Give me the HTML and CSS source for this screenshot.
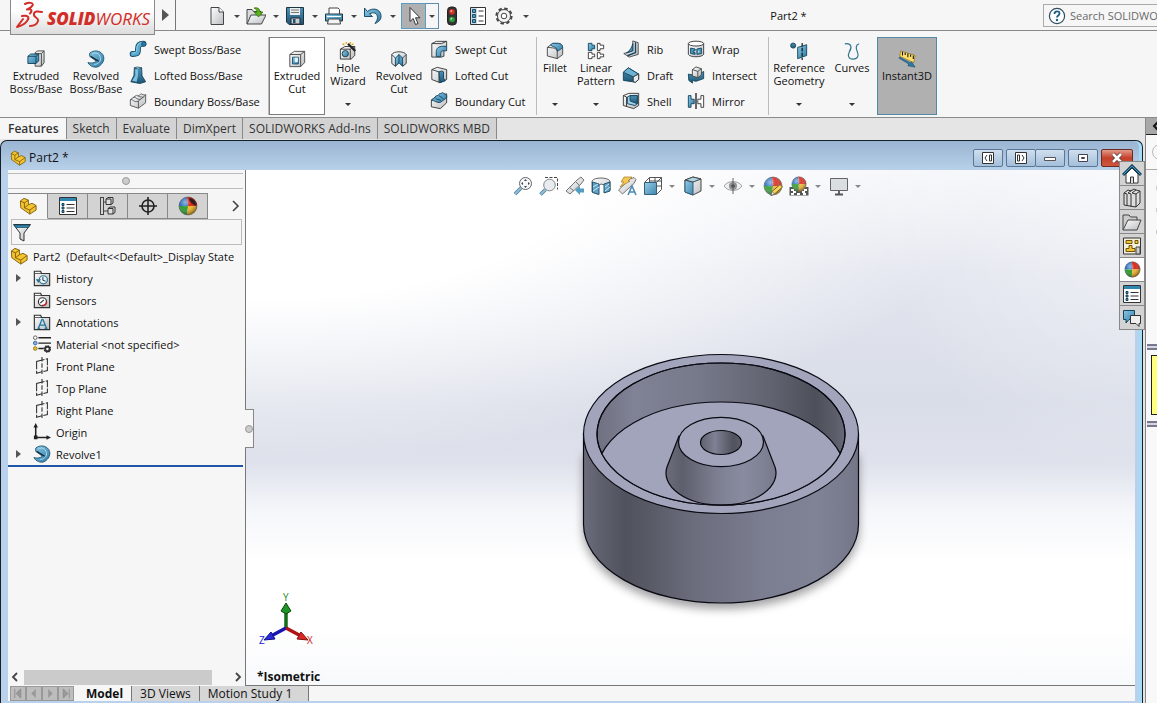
FILE: index.html
```html
<!DOCTYPE html>
<html lang="en">
<head>
    <meta charset="UTF-8">
    <meta name="viewport" content="width=device-width, initial-scale=1.0">
    <title>SOLIDWORKS - Part2 *</title>
    <link rel="stylesheet" href="styles.css">
</head>
<body>
    <!-- Icon sprite -->
    <svg class="sprite" aria-hidden="true">
        <defs>
            <linearGradient id="blue" x1="0" y1="0" x2="1" y2="1">
                <stop offset="0" stop-color="#8cc8e4"/><stop offset="1" stop-color="#2c7ba6"/>
            </linearGradient>
            <linearGradient id="grey" x1="0" y1="0" x2="1" y2="1">
                <stop offset="0" stop-color="#ffffff"/><stop offset="1" stop-color="#b9bcbf"/>
            </linearGradient>
            <linearGradient id="navy" x1="0" y1="0" x2="0" y2="1">
                <stop offset="0" stop-color="#4d93b8"/><stop offset="1" stop-color="#1d5573"/>
            </linearGradient>
            <radialGradient id="shine" cx=".35" cy=".3" r=".7">
                <stop offset="0" stop-color="#fff" stop-opacity=".5"/><stop offset=".45" stop-color="#fff" stop-opacity="0"/><stop offset="1" stop-color="#000" stop-opacity=".4"/>
            </radialGradient>
        </defs>

        <!-- quick access -->
        <symbol id="i-new" viewBox="0 0 20 20"><path d="M4 1.500h8l4.500 4.500v12.500H4z" fill="url(#grey)" stroke="#444"/><path d="M12 1.500v4.500h4.500" fill="#fff" stroke="#444"/></symbol>
        <symbol id="i-open" viewBox="0 0 20 20"><path d="M1 18V3.500h5l1.500 2H15V9" fill="#d8dadb" stroke="#444"/><path d="M1 18l4-9h15l-4.500 9z" fill="url(#grey)" stroke="#444"/><path d="M8 2c4-1 6 1 6 4h3l-4.500 5L8 6h3c0-2-1-3-3-4z" fill="#58b21c" stroke="#2d6b08" stroke-width=".7"/></symbol>
        <symbol id="i-save" viewBox="0 0 20 20"><path d="M1.500 1.500h17v17H4l-2.500-2.500z" fill="url(#navy)" stroke="#20343f"/><path d="M5 2h10v7H5z" fill="#eceeef"/><path d="M6 4h8M6 6.500h8" stroke="#777"/><path d="M6 12h9v6H6z" fill="#c9cdd0" stroke="#223"/><path d="M8 13h2.500v4H8z" fill="#1d5573"/></symbol>
        <symbol id="i-print" viewBox="0 0 20 20"><path d="M5 8V2h9l1.500 1.500V8" fill="#fff" stroke="#444"/><path d="M1.500 8h17v7h-17z" fill="url(#blue)" stroke="#20343f"/><path d="M3 10.500h14" stroke="#fff"/><path d="M4.500 13h11l1 5h-13z" fill="#f3f3f3" stroke="#444"/></symbol>
        <symbol id="i-undo" viewBox="0 0 20 20"><path d="M1.500 2v8.500h8L6.500 8c4-2.500 8-1 8 3.500 0 2-1 4-2.500 6 4-1.500 6.500-4.500 6-8C17.500 3 9.500 1 4.500 5.500z" fill="url(#blue)" stroke="#1d4f6b"/></symbol>
        <symbol id="i-cursor" viewBox="0 0 20 20"><path d="M6 1.500v14l3.200-3 2.300 6 2.500-1-2.500-5.700H16z" fill="#fff" stroke="#333"/></symbol>
        <symbol id="i-light" viewBox="0 0 20 20"><rect x="5.500" y="1" width="9" height="18" rx="3.500" fill="#333" stroke="#222"/><circle cx="10" cy="5.800" r="2.800" fill="#d93024"/><circle cx="10" cy="13.500" r="2.800" fill="#2c9a3a"/><circle cx="9.300" cy="5" r="1" fill="#f9b0a8"/><circle cx="9.300" cy="12.700" r="1" fill="#a5e2ad"/></symbol>
        <symbol id="i-list" viewBox="0 0 20 20"><path d="M2.500 1.500h15v17h-15z" fill="#fff" stroke="#333"/><path d="M3 2h6v16H3z" fill="#c8dbe6"/><path d="M4.500 3.500h3v3h-3zM4.500 8.500h3v3h-3zM4.500 13.500h3v3h-3z" fill="#4f9cc4" stroke="#1d4f6b"/><path d="M10.500 5h5M10.500 10h5M10.500 15h5" stroke="#333"/></symbol>
        <symbol id="i-gear" viewBox="0 0 20 20"><circle cx="10" cy="10" r="7.600" fill="none" stroke="#444" stroke-width="2" stroke-dasharray="3.500 2.470"/><circle cx="10" cy="10" r="6.500" fill="#f5f5f5" stroke="#444"/><circle cx="10" cy="10" r="2.800" fill="#fff" stroke="#444"/></symbol>
        <symbol id="i-help" viewBox="0 0 20 20"><circle cx="10" cy="10" r="7.600" fill="#fff" stroke="#2f4d5d" stroke-width="1.200"/><path d="M7.500 8c0-3.500 5-3.500 5-.5 0 2-2.500 2-2.500 4" fill="none" stroke="#1f5f85" stroke-width="1.800"/><circle cx="10" cy="14" r="1.200" fill="#1f5f85"/></symbol>

        <!-- boss / base -->
        <symbol id="i-extrude" viewBox="0 0 20 20"><path d="M9 3l3-2h7v13l-3 4H9z" fill="url(#grey)" stroke="#444"/><path d="M16 18V4l3-3M16 4H9" fill="none" stroke="#444"/><path d="M1 7l3-2.500h9V12l-3 3H1z" fill="url(#blue)" stroke="#123f58"/><path d="M1 7h9v8M10 7l3-2.500" fill="none" stroke="#123f58"/></symbol>
        <symbol id="i-revolve" viewBox="0 0 20 20"><path d="M3 3.500C7 0 14 0 17.500 5c3 5 0 11-5 13.500-4 1.500-9 0-11.500-4.500 3 1 7 .5 9.500-1.500L3 7z" fill="url(#blue)" stroke="#1d5573"/><path d="M4 7l9 5.500" stroke="#123" stroke-width="1.400"/><path d="M6 4c5-2 9 1 9 6 0 3-3 6-7 6" fill="none" stroke="#b5dced"/></symbol>
        <symbol id="i-sweep" viewBox="0 0 20 20"><path d="M4 15.500c6 0 6-1 6-6 0-4 2-5.500 6-5.500" fill="none" stroke="#184c68" stroke-width="6.500" stroke-linecap="round"/><path d="M4 15.500c6 0 6-1 6-6 0-4 2-5.500 6-5.500" fill="none" stroke="#5aa9cf" stroke-width="4.500" stroke-linecap="round"/><path d="M4 14.500c4 0 4.800-1 4.800-5 0-4.500 2.200-6.200 6.200-6.200" fill="none" stroke="#9bd1e8"/><circle cx="16.500" cy="4.500" r="2.500" fill="#2c7ba6" stroke="#184c68"/></symbol>
        <symbol id="i-loft" viewBox="0 0 20 20"><path d="M6 2h8l.5 9 4 6.500-6.500 2-10-2 3.500-7z" fill="url(#navy)" stroke="#14435c"/><path d="M6 2l3-1 5 1-3 1.500z" fill="#a9d7eb" stroke="#14435c" stroke-width=".7"/><path d="M7 3.500h3v7l-1.500 7-5-1 3.500-6z" fill="#7dbfdd"/></symbol>
        <symbol id="i-boundary" viewBox="0 0 20 20"><path d="M1.500 8.500l7-5c1.500 2 3 0 5-1.500 1.500 1 3 1.500 5 1v9l-8 6-9-3z" fill="url(#grey)" stroke="#555"/><path d="M1.500 8.500c3-1 4 4 9 1.500 3-3 5-3 8-7M10.500 10v8M5 6c3-1 3 3 8 2M10 4c2 2 3 1 6 2" fill="none" stroke="#555"/></symbol>

        <!-- cuts -->
        <symbol id="i-excut" viewBox="0 0 20 20"><path d="M2 5l5-3.500h11.500V14L14 18.500H2z" fill="url(#grey)" stroke="#444"/><path d="M2 5h12v13.500M14 5l4.500-3.500" fill="none" stroke="#444"/><path d="M5 8h6.500v7.500H5z" fill="url(#blue)" stroke="#1d4f6b"/><path d="M7.500 8.500H11v5H7.500z" fill="#e5f3f9"/></symbol>
        <symbol id="i-hole" viewBox="0 0 20 20"><path d="M1.500 8l5-3h11v10l-4 4h-12z" fill="url(#grey)" stroke="#333"/><path d="M1.500 8h11v11M12.500 8l5-3" fill="none" stroke="#333"/><circle cx="7" cy="13" r="3.500" fill="url(#blue)" stroke="#20343f"/><path d="M10 2l8 8" stroke="#222" stroke-width="2.500"/><path d="M4 2l2 1M8 0v2M13 0l-1 2M16 2l-2 1" stroke="#e2a100" stroke-width="1.500"/></symbol>
        <symbol id="i-revcut" viewBox="0 0 20 20"><path d="M2 5c2-4 14-4 16 0v10l-4 3-4-4-4 4-4-3z" fill="url(#grey)" stroke="#333"/><path d="M6 18V9l4-4 4 4v9l-4-4z" fill="url(#blue)" stroke="#14435c"/><path d="M2 5l4 4M18 5l-4 4M10 5v9" stroke="#14435c" fill="none"/></symbol>
        <symbol id="i-swcut" viewBox="0 0 20 20"><path d="M2 4l5-2.500h11.500V7l-3 3v8l-3 1H2z" fill="url(#grey)" stroke="#333"/><path d="M7 18.500V13c0-4 3-6 7-6h4.500v5H15c-2 0-3 1-3 3v3.500z" fill="url(#blue)" stroke="#14435c"/><path d="M2 4h11l5-2.500" fill="none" stroke="#333"/></symbol>
        <symbol id="i-locut" viewBox="0 0 20 20"><path d="M2 4l6-2.500L18.500 4v11L11 18.500 2 15z" fill="url(#grey)" stroke="#333"/><path d="M2 4l8 2.500v12" fill="none" stroke="#333"/><path d="M10 6.500l3-1 2 1v7l2 3-6 2z" fill="url(#navy)" stroke="#14435c"/></symbol>
        <symbol id="i-bocut" viewBox="0 0 20 20"><path d="M1.500 9l7-5 10-2v10l-7 6.500-10-2z" fill="url(#grey)" stroke="#333"/><path d="M1.500 9l4-3c1-3 3-1 4-3s4-1 4.500-2.500L18.500 4v2.500l-7 5c-4 1-6-2-10-2.500z" fill="url(#blue)" stroke="#14435c"/><path d="M6 6.500c2 3 4 1 6 3M10 4c2 2 3 1 5 4" fill="none" stroke="#14435c"/></symbol>

        <!-- features -->
        <symbol id="i-fillet" viewBox="0 0 20 20"><path d="M1.500 6l6-4.500h6c3 0 5 2 5 5V14l-6 4.500-11-3z" fill="url(#grey)" stroke="#444"/><path d="M7 1.500h6.500c3 0 5 2 5 5l-6 4C12.500 7 11 6 8 5l-3-1.500z" fill="url(#blue)" stroke="#1d4f6b"/><path d="M1.500 6l6 .5c3 .5 5 1.500 5 4v8" fill="none" stroke="#444"/></symbol>
        <symbol id="i-pattern" viewBox="0 0 20 20"><g stroke="#333" fill="#fff"><path d="M1.500 1.500h4v2h3v4h-3v2h-4z" fill="url(#blue)" stroke="#14435c"/><path d="M11.500 1.500h3v2h4v4h-4v2h-3zM1.500 11.500h4v2h3v3h-3v2h-4zM11.500 11.500h3v2h4v3h-4v2h-3z"/></g></symbol>
        <symbol id="i-rib" viewBox="0 0 20 20"><path d="M12 1l6 2v13l-10 3-6-4 10-3z" fill="url(#grey)" stroke="#444"/><path d="M12 4v8l-7 2.500C9 12 11 8 12 4z" fill="url(#blue)" stroke="#14435c"/><path d="M15 2.500V14l-9 3.500" fill="none" stroke="#14435c" stroke-width="1.500"/></symbol>
        <symbol id="i-draft" viewBox="0 0 20 20"><path d="M1.500 7L7 2l11.500 7v6L15 18 1.500 16z" fill="url(#navy)" stroke="#14435c"/><path d="M1.500 7L7 2l11.500 7-6 3z" fill="#6db2d3" stroke="#14435c"/><path d="M12.500 12l6-3v6L15 18l-2.500-.5z" fill="#e8eaec" stroke="#333"/></symbol>
        <symbol id="i-shell" viewBox="0 0 20 20"><path d="M1.500 4l6-2.500h11V15L13 18.500 1.500 15z" fill="url(#grey)" stroke="#333"/><path d="M6 5.500L9 4h8v9l-2.500 2-8.500-2z" fill="#9fd0e6" stroke="#14435c"/><path d="M9 4h8v9l-8-3z" fill="url(#navy)" stroke="#14435c"/><path d="M1.500 4L5 5.500V16" fill="none" stroke="#333"/></symbol>
        <symbol id="i-wrap" viewBox="0 0 20 20"><path d="M1.500 4v12c2 3.500 15 3.500 17 0V4z" fill="url(#grey)" stroke="#333"/><ellipse cx="10" cy="4" rx="8.500" ry="2.700" fill="#fff" stroke="#333"/><path d="M4 9l5 1v2H7v2h2v2l-5-1zM11 10l5-1v6l-5 1z" fill="#4b9bc2" stroke="#14435c"/><path d="M13 12v2" stroke="#fff"/></symbol>
        <symbol id="i-intersect" viewBox="0 0 20 20"><path d="M1.500 9l5 1 4 1 8-5v8L10 17l-4-1v3l-4-3z" fill="url(#navy)" stroke="#14435c"/><path d="M6 4l4-3 6 2v7l-4 3-6-2z" fill="url(#grey)" stroke="#444"/><path d="M6 4l6 2v7M12 6l4-3" fill="none" stroke="#444"/></symbol>
        <symbol id="i-mirror" viewBox="0 0 20 20"><path d="M1.500 4h3v4h3.500v5H4.500v4h-3z" fill="url(#blue)" stroke="#14435c"/><path d="M10 1v18" stroke="#111" stroke-width="1.400"/><path d="M18.500 4h-3v4H12v5h3.500v4h3z" fill="#fff" stroke="#333"/></symbol>
        <symbol id="i-refgeo" viewBox="0 0 20 20"><circle cx="3.500" cy="4" r="2.800" fill="url(#navy)" stroke="#14435c"/><path d="M8.500 6l10-3v12l-10 3.500z" fill="url(#blue)" stroke="#14435c"/><path d="M13.500 1v19" stroke="#111" stroke-width="1.300" stroke-dasharray="4 1.500"/></symbol>
        <symbol id="i-curves" viewBox="0 0 20 20"><path d="M2 2c8-1 8 4 5 9-2 4-1 8 4 8 5 0 7-3 5-8-2-4-2-8 2-9" fill="none" stroke="#2f7290" stroke-width="1.300"/></symbol>
        <symbol id="i-instant" viewBox="0 0 20 20"><path d="M3 1l16 5-1.500 8L2 7z" fill="#ffe06a" stroke="#8a6a10" stroke-width=".7"/><path d="M5 2v4M8 3v2.500M11 4v4M14 5v2.500M17 6v4" stroke="#111" stroke-width="1.200"/><path d="M1 9l11 6.500-1 2 8 1.500-4-6-1 1.500L2 8z" fill="#2c7ba6" stroke="#1d4f6b" stroke-width=".7"/></symbol>

        <!-- tree -->
        <symbol id="i-part" viewBox="0 0 20 20"><path d="M1.500 4.500l4-3 5 2v5l4-1.500 4.500 2.500v5l-7 4.500-10-7z" fill="#f4c530" stroke="#7a5a08"/><path d="M1.500 4.500l4.500 2v5.500l6 2.500V19M6 6.500l4.500-3M10.500 8.500L6 12M12 14.500l7-5" fill="none" stroke="#7a5a08"/></symbol>
        <symbol id="i-props" viewBox="0 0 20 20"><path d="M1.500 1.500h17v17h-17z" fill="#fff" stroke="#333"/><path d="M2 2h16v3H2z" fill="#2f86ae"/><path d="M4 7.500h2v2H4zM4 11h2v2H4zM4 14.500h2v2H4z" fill="#4b9bc2" stroke="#14435c"/><path d="M8.500 8.500h8M8.500 12h8M8.500 15.500h8" stroke="#333"/></symbol>
        <symbol id="i-config" viewBox="0 0 20 20"><path d="M5.500 1v18M2.500 1v18M5.500 6H9M5.500 15h6M2 1.500h4M2 18.500h4" fill="none" stroke="#444"/><path d="M8 3l2-1.500h5V7l-2 1.500H8zM10 12.500l2-1.500h5v5.500L15 18h-5z" fill="#ddd" stroke="#333"/><path d="M8 3h5v5.500M10 12.500h5V18" fill="none" stroke="#333"/></symbol>
        <symbol id="i-target" viewBox="0 0 20 20"><circle cx="10" cy="10" r="6" fill="none" stroke="#222" stroke-width="1.600"/><path d="M10 1v18M1 10h18" stroke="#222" stroke-width="1.600"/></symbol>
        <symbol id="i-ball" viewBox="0 0 20 20"><path d="M10 10L9 1a9 9 0 0 0-8 9z" fill="#2b6fc2"/><path d="M10 10L9 1a9 9 0 0 1 10 9z" fill="#d92a1c"/><path d="M10 10H1a9 9 0 0 0 8 9z" fill="#2f9a32"/><path d="M10 10h9a9 9 0 0 1-10 9z" fill="#f2b52a"/><circle cx="10" cy="10" r="9" fill="url(#shine)" stroke="#555" stroke-width=".6"/></symbol>
        <symbol id="i-ballcut" viewBox="0 0 20 20"><use href="#i-ball"/><path d="M11 2c4 0 7 3 7.500 7-3 1-7-3-7.500-7z" fill="#222" stroke="#8d1a14"/></symbol>
        <symbol id="i-filter" viewBox="0 0 20 20"><path d="M1.500 2.500h17L12 11v8l-4-2v-6z" fill="url(#grey)" stroke="#333"/><path d="M2 3h16l-1.800 2.500H3.800z" fill="#2f86ae" stroke="#14435c" stroke-width=".7"/></symbol>
        <symbol id="i-folder" viewBox="0 0 20 20"><path d="M1.500 18.500v-16h7l1 2.500h9v13.500z" fill="url(#grey)" stroke="#333" stroke-width="1.300"/><path d="M2 5h7" stroke="#555"/></symbol>
        <symbol id="i-history" viewBox="0 0 20 20"><use href="#i-folder"/><circle cx="11.500" cy="12" r="4.500" fill="#e9f4f9" stroke="#2f7290" stroke-width="1.300"/><path d="M11 9v3.500l3 1" fill="none" stroke="#123"/><path d="M3 11.500h6l-3 4z" fill="#2f7290"/></symbol>
        <symbol id="i-sensors" viewBox="0 0 20 20"><use href="#i-folder"/><circle cx="10.500" cy="12" r="4.500" fill="#fff" stroke="#333" stroke-width="1.300"/><path d="M8 13.500l4-3.500" stroke="#333" stroke-width="1.300"/><path d="M10 16c3 .5 5-1.500 5-4" fill="none" stroke="#c1272d" stroke-width="1.800"/></symbol>
        <symbol id="i-annot" viewBox="0 0 20 20"><use href="#i-folder"/><path d="M6 17l4-10h1l4 10M7.500 13.500h6M5 17h3M13 17h3" fill="none" stroke="#2477a1" stroke-width="1.500"/></symbol>
        <symbol id="i-material" viewBox="0 0 20 20"><path d="M6 3h14M6 9h14M6 15h6" stroke="#222" stroke-width="1.600"/><circle cx="2.500" cy="3" r="2" fill="#fff" stroke="#555"/><circle cx="2.500" cy="9" r="2" fill="#7fb2e6" stroke="#2d5fa0"/><circle cx="2.500" cy="15" r="2" fill="#f0c330" stroke="#8a6a10"/><circle cx="16" cy="15.500" r="2.500" fill="none" stroke="#333" stroke-width="2.200"/><circle cx="16" cy="15.500" r="3.600" fill="none" stroke="#333" stroke-width="1.300" stroke-dasharray="1.400 1.400"/></symbol>
        <symbol id="i-plane" viewBox="0 0 20 20"><path d="M4 5l12-3v13L4 18z" fill="none" stroke="#333" stroke-width="1.200" stroke-dasharray="9 1.500"/><path d="M10 0v20" stroke="#333" stroke-width="1.200" stroke-dasharray="5 2"/></symbol>
        <symbol id="i-origin" viewBox="0 0 20 20"><path d="M3 4v12h13" fill="none" stroke="#222" stroke-width="1.700"/><path d="M3 0l2.500 5H.5zM20 16l-5 2.500v-5zM1 14h4v4H1z" fill="#222"/></symbol>

        <!-- view toolbar -->
        <symbol id="i-zoomfit" viewBox="0 0 20 20"><path d="M2 18l6-6" stroke="#36708f" stroke-width="3.500"/><path d="M2 18l6-6" stroke="#85b7d1" stroke-width="2"/><circle cx="12.500" cy="7.500" r="6" fill="#f4f7fa" stroke="#555"/><path d="M12.500 3l1.500 2h-3zM12.500 12l1.500-2h-3zM8 7.500l2-1.500v3zM17 7.500L15 6v3z" fill="#333"/></symbol>
        <symbol id="i-zoomarea" viewBox="0 0 20 20"><path d="M6 1.500h12.500v12" fill="none" stroke="#333" stroke-dasharray="3 1.500"/><path d="M1.500 18.500l5-5" stroke="#36708f" stroke-width="3.500"/><path d="M1.500 18.500l5-5" stroke="#85b7d1" stroke-width="2"/><circle cx="10.500" cy="9" r="5.800" fill="#e6ebf0" stroke="#777"/></symbol>
        <symbol id="i-prev" viewBox="0 0 20 20"><path d="M1 15l11-11 4-3 3 3-3 4L5 18z" fill="url(#grey)" stroke="#666"/><path d="M10 5l5 5M4 11l5 4" stroke="#666"/><path d="M10 14l5-4v2.500h4v4h-4V19z" fill="#3f93bb"/></symbol>
        <symbol id="i-section" viewBox="0 0 20 20"><path d="M1 5c2-4 16-4 18 0v9l-5 2V9l-4-1-3 2v8l-6-2z" fill="url(#grey)" stroke="#555"/><path d="M1.500 6L8 8v10.500l-6.500-2z" fill="#4b9bc2" stroke="#14435c"/><path d="M13 8l6-2v9l-6 2z" fill="#4b9bc2" stroke="#14435c"/><path d="M2 11l5-3M2 15l6-4M14 11l4-3M14 15l5-4" stroke="#c8e5f1"/></symbol>
        <symbol id="i-dynview" viewBox="0 0 20 20"><path d="M1.500 14L13 3l4-1.500 2 2-2 4L5.500 18z" fill="url(#grey)" stroke="#666"/><path d="M7 1h8l-4 4h2L3 11l4-5H4z" fill="#f5c243" stroke="#9a6a10" stroke-width=".7"/><path d="M11 19l4-9 4 9M12.500 16h5" fill="none" stroke="#3a7fa8" stroke-width="1.600"/></symbol>
        <symbol id="i-orient" viewBox="0 0 20 20"><path d="M1.500 6.500l5-5h12v12l-5 5M6.500 1.500v5M6.500 5h12M12 1.500v5M18.500 1.500l-5 5M14 10h4.500" fill="#fff" stroke="#444"/><path d="M1.500 6.500h12v12h-12z" fill="url(#blue)" stroke="#1d4f6b"/></symbol>
        <symbol id="i-display" viewBox="0 0 20 20"><path d="M2 4l8-3 8 2v12l-8 4-8-3z" fill="url(#grey)" stroke="#333"/><path d="M2 4l8 2v13l-8-3z" fill="url(#blue)" stroke="#1d4f6b"/><path d="M2 4l8-3 8 2-8 3z" fill="#a5d2e6" stroke="#333"/></symbol>
        <symbol id="i-eye" viewBox="0 0 20 20"><path d="M1 10c4-6 14-6 18 0-4 6-14 6-18 0z" fill="#eceff2" stroke="#999"/><circle cx="10" cy="10" r="4" fill="#888"/><circle cx="10" cy="10" r="1.800" fill="#333"/><path d="M10 2v16" stroke="#555"/></symbol>
        <symbol id="i-appear" viewBox="0 0 20 20"><svg width="18" height="18" viewBox="0 0 20 20"><use href="#i-ball" width="20" height="20"/></svg><path d="M8 19.500l1-4 8-7 2.500 2.500-8 7z" fill="#f5cf4b" stroke="#6d5310"/><path d="M8 19.500l1-4 2.500 2.500z" fill="#fff" stroke="#444" stroke-width=".7"/></symbol>
        <symbol id="i-scene" viewBox="0 0 20 20"><path d="M.5 11h19v8.500H.5z" fill="#444"/><path d="M2 13h3v2H2zM15 13h3v2h-3zM4 15h3v2H4zM13 15h3v2h-3zM2 17h3v2H2zM8 17h3v2H8zM14 17h3v2h-3z" fill="#fff"/><use href="#i-ball" x="2" width="16" height="16"/></symbol>
        <symbol id="i-monitor" viewBox="0 0 20 20"><path d="M1.500 2.500h17v12h-17z" fill="#d9dcdf" stroke="#555"/><path d="M10 15v3M6 18.500h8" stroke="#444" stroke-width="1.800"/></symbol>

        <!-- task pane -->
        <symbol id="i-home" viewBox="0 0 20 20"><path d="M4 10v9h12v-9l-6-6z" fill="#fff" stroke="#333"/><path d="M8.500 19v-6h3v6" fill="#ddd" stroke="#333"/><path d="M1 11l9-9 9 9" fill="none" stroke="#14435c" stroke-width="3"/><path d="M1.500 10.500L10 2l8.500 8.500" fill="none" stroke="#4b9bc2"/></symbol>
        <symbol id="i-library" viewBox="0 0 20 20"><path d="M2 5l4-3 3 1 3-2 2 1 4 1v12l-4 4-12-2z" fill="#ddd" stroke="#333"/><path d="M2 5l3 1v12M6 5l4-3M6 5l3 1v13M10 5l4-3M10 5l4 1v13M14 6l4-3" fill="none" stroke="#333"/></symbol>
        <symbol id="i-files" viewBox="0 0 20 20"><path d="M1 18V3h6l1.500 2H15v4" fill="#ccc" stroke="#444"/><path d="M1 18L6 8h13l-4 10z" fill="url(#grey)" stroke="#444"/></symbol>
        <symbol id="i-palette" viewBox="0 0 20 20"><path d="M1.500 2h17v16h-17z" fill="#f4f0dc" stroke="#333"/><path d="M4 4.500h6v3H4zM13 4.500h3v3h-3zM4 15.500v-3h3v-3h3v3h3v3z" fill="#f4c530" stroke="#6d5310"/><path d="M14 11h4v7h-4z" fill="#ccc" stroke="#444"/></symbol>
        <symbol id="i-forum" viewBox="0 0 20 20"><path d="M1.500 2.500h11v9H7l-3 3.500v-3.500H1.500z" fill="url(#blue)" stroke="#14435c"/><path d="M8.500 7.500h10v8H17v3l-3-3H8.500z" fill="#eee" stroke="#333"/></symbol>
    </svg>

    <header class="app-bar">
        <div class="logo">
            <svg class="logo-mark" viewBox="0 0 28 28" aria-hidden="true">
                <g fill="none" stroke="#d22d26" stroke-width="2" stroke-linecap="round" stroke-linejoin="round">
                    <path d="M10 3c4-2 9-1.500 7.500 1.500-1 2-3.500 3-5.500 4 4-1 6 .5 3 4"/>
                    <path d="M7 15c6-1 8 1 5 5-2 3-6 5-10 6l6-8"/>
                    <path d="M27 11c-4-1-8-1-8 2-1 4 5 3 4 7-1 3-4 5-8 5"/>
                </g>
            </svg>
            <span class="logo-text"><b>SOLID</b>WORKS</span>
        </div>
        <button class="menu-arrow" aria-label="Menu"></button>
        <nav class="quick-bar" aria-label="Quick access">
            <button class="quick-btn" aria-label="New"><svg><use href="#i-new"/></svg></button><button class="drop" aria-label="New options"></button>
            <button class="quick-btn" aria-label="Open"><svg><use href="#i-open"/></svg></button><button class="drop" aria-label="Open options"></button>
            <button class="quick-btn" aria-label="Save"><svg><use href="#i-save"/></svg></button><button class="drop" aria-label="Save options"></button>
            <button class="quick-btn" aria-label="Print"><svg><use href="#i-print"/></svg></button><button class="drop" aria-label="Print options"></button>
            <button class="quick-btn" aria-label="Undo"><svg><use href="#i-undo"/></svg></button><button class="drop" aria-label="Undo options"></button>
            <button class="quick-btn picked" aria-label="Select"><svg><use href="#i-cursor"/></svg></button><button class="drop boxed" aria-label="Select options"></button>
            <button class="quick-btn wide" aria-label="Rebuild"><svg><use href="#i-light"/></svg></button>
            <button class="quick-btn wide" aria-label="File properties"><svg><use href="#i-list"/></svg></button>
            <button class="quick-btn wide" aria-label="Options"><svg><use href="#i-gear"/></svg></button><button class="drop" aria-label="Options list"></button>
        </nav>
        <div class="doc-title">Part2 *</div>
        <label class="search">
            <svg aria-hidden="true"><use href="#i-help"/></svg>
            <input type="text" placeholder="Search SOLIDWORKS Help" aria-label="Search">
        </label>
    </header>

    <section class="ribbon">
        <button class="tool w60"><svg><use href="#i-extrude"/></svg>Extruded<br>Boss/Base</button>
        <button class="tool w60"><svg><use href="#i-revolve"/></svg>Revolved<br>Boss/Base</button>
        <div class="stack boss">
            <button><svg><use href="#i-sweep"/></svg>Swept Boss/Base</button>
            <button><svg><use href="#i-loft"/></svg>Lofted Boss/Base</button>
            <button><svg><use href="#i-boundary"/></svg>Boundary Boss/Base</button>
        </div>
        <button class="tool w56 hovered"><svg><use href="#i-excut"/></svg>Extruded<br>Cut</button>
        <button class="tool w46 has-drop"><svg><use href="#i-hole"/></svg>Hole<br>Wizard</button>
        <button class="tool w56"><svg><use href="#i-revcut"/></svg>Revolved<br>Cut</button>
        <div class="stack cuts">
            <button><svg><use href="#i-swcut"/></svg>Swept Cut</button>
            <button><svg><use href="#i-locut"/></svg>Lofted Cut</button>
            <button><svg><use href="#i-bocut"/></svg>Boundary Cut</button>
        </div>
        <button class="tool w36 has-drop"><svg><use href="#i-fillet"/></svg>Fillet</button>
        <button class="tool w46 has-drop"><svg><use href="#i-pattern"/></svg>Linear<br>Pattern</button>
        <div class="stack solids">
            <button><svg><use href="#i-rib"/></svg>Rib</button>
            <button><svg><use href="#i-draft"/></svg>Draft</button>
            <button><svg><use href="#i-shell"/></svg>Shell</button>
        </div>
        <div class="stack bodies">
            <button><svg><use href="#i-wrap"/></svg>Wrap</button>
            <button><svg><use href="#i-intersect"/></svg>Intersect</button>
            <button><svg><use href="#i-mirror"/></svg>Mirror</button>
        </div>
        <button class="tool w60 has-drop"><svg><use href="#i-refgeo"/></svg>Reference<br>Geometry</button>
        <button class="tool w46 has-drop curves"><svg><use href="#i-curves"/></svg>Curves</button>
        <button class="tool w60 active"><svg><use href="#i-instant"/></svg>Instant3D</button>
    </section>

    <div class="lower">
        <main class="desk">
            <nav class="tabs">
                <button class="tab current">Features</button>
                <button class="tab">Sketch</button>
                <button class="tab">Evaluate</button>
                <button class="tab">DimXpert</button>
                <button class="tab">SOLIDWORKS Add-Ins</button>
                <button class="tab">SOLIDWORKS MBD</button>
            </nav>

            <div class="window">
                <div class="window-bar">
                    <svg class="part-icon" aria-hidden="true"><use href="#i-part"/></svg>
                    <span>Part2 *</span>
                    <div class="window-btns">
                        <button aria-label="Dock left"><svg viewBox="0 0 14 14"><path d="M1.500 1.500h11v11h-11z" fill="#fff" stroke="#333"/><path d="M6 4L4 7l2 3M8.500 4v6h2V4z" fill="none" stroke="#333"/></svg></button>
                        <button aria-label="Dock right"><svg viewBox="0 0 14 14"><path d="M1.500 1.500h11v11h-11z" fill="#fff" stroke="#333"/><path d="M8 4l2 3-2 3M3.500 4v6h2V4z" fill="none" stroke="#333"/></svg></button>
                        <button class="joined" aria-label="Minimize"><svg viewBox="0 0 14 14"><path d="M1.500 6.500h11v3h-11z" fill="#fff" stroke="#555"/></svg></button>
                        <button aria-label="Restore"><svg viewBox="0 0 14 14"><path d="M2.500 3.500h9v7h-9z" fill="#fff" stroke="#445"/><path d="M5.500 6.500h3v1h-3z" fill="none" stroke="#445"/></svg></button>
                        <button class="close" aria-label="Close"><svg viewBox="0 0 14 14"><path d="M3 3l8 8M11 3l-8 8" stroke="#5b3a3a" stroke-width="4"/><path d="M3 3l8 8M11 3l-8 8" stroke="#fff" stroke-width="2.500"/></svg></button>
                    </div>
                </div>

                <div class="window-body">
                    <aside class="side">
                        <div class="grip"></div>
                        <div class="side-tabs">
                            <button class="current" aria-label="Feature tree"><svg><use href="#i-part"/></svg></button>
                            <button aria-label="Properties"><svg><use href="#i-props"/></svg></button>
                            <button aria-label="Configurations"><svg><use href="#i-config"/></svg></button>
                            <button aria-label="Dimensions"><svg><use href="#i-target"/></svg></button>
                            <button aria-label="Display"><svg><use href="#i-ballcut"/></svg></button>
                            <button class="more" aria-label="More tabs"><svg viewBox="0 0 20 20"><path d="M8 5l5 5-5 5" fill="none" stroke="#444" stroke-width="1.600"/></svg></button>
                        </div>
                        <label class="filter">
                            <svg aria-hidden="true"><use href="#i-filter"/></svg>
                            <input type="text" aria-label="Filter">
                        </label>
                        <div class="tree-root"><svg><use href="#i-part"/></svg>Part2&nbsp; (Default&lt;&lt;Default&gt;_Display State</div>
                        <ul class="tree">
                            <li class="closed"><svg><use href="#i-history"/></svg>History</li>
                            <li><svg><use href="#i-sensors"/></svg>Sensors</li>
                            <li class="closed"><svg><use href="#i-annot"/></svg>Annotations</li>
                            <li><svg><use href="#i-material"/></svg>Material &lt;not specified&gt;</li>
                            <li><svg><use href="#i-plane"/></svg>Front Plane</li>
                            <li><svg><use href="#i-plane"/></svg>Top Plane</li>
                            <li><svg><use href="#i-plane"/></svg>Right Plane</li>
                            <li><svg><use href="#i-origin"/></svg>Origin</li>
                            <li class="closed"><svg><use href="#i-revolve"/></svg>Revolve1</li>
                        </ul>
                        <div class="scroll">
                            <svg viewBox="0 0 16 16"><path d="M9 4L5 8l4 4" fill="none" stroke="#444" stroke-width="1.800"/></svg>
                            <div class="thumb"></div>
                            <svg viewBox="0 0 16 16"><path d="M7 4l4 4-4 4" fill="none" stroke="#444" stroke-width="1.800"/></svg>
                        </div>
                    </aside>

                    <div class="viewport">
                        <div class="view-tools">
                            <button aria-label="Zoom to fit"><svg><use href="#i-zoomfit"/></svg></button>
                            <button aria-label="Zoom to area"><svg><use href="#i-zoomarea"/></svg></button>
                            <button aria-label="Previous view"><svg><use href="#i-prev"/></svg></button>
                            <button aria-label="Section view"><svg><use href="#i-section"/></svg></button>
                            <button aria-label="Dynamic annotation views"><svg><use href="#i-dynview"/></svg></button>
                            <button class="more" aria-label="View orientation"><svg><use href="#i-orient"/></svg></button>
                            <button class="more" aria-label="Display style"><svg><use href="#i-display"/></svg></button>
                            <button class="more" aria-label="Hide or show items"><svg><use href="#i-eye"/></svg></button>
                            <button aria-label="Edit appearance"><svg><use href="#i-appear"/></svg></button>
                            <button class="more" aria-label="Apply scene"><svg><use href="#i-scene"/></svg></button>
                            <button class="more" aria-label="View settings"><svg><use href="#i-monitor"/></svg></button>
                        </div>

                        <!-- part -->
                        <svg class="model" viewBox="246 170 889 515">
                            <defs>
                                <linearGradient id="outer">
                                    <stop offset="0" stop-color="#6c6e7e"/><stop offset=".05" stop-color="#60626f"/><stop offset=".15" stop-color="#50525e"/>
                                    <stop offset=".23" stop-color="#575965"/><stop offset=".4" stop-color="#6b6d7d"/><stop offset=".65" stop-color="#7b7d90"/>
                                    <stop offset=".85" stop-color="#808296"/><stop offset="1" stop-color="#747688"/>
                                </linearGradient>
                                <linearGradient id="inner">
                                    <stop offset="0" stop-color="#6f7182"/><stop offset=".15" stop-color="#808295"/><stop offset=".4" stop-color="#777a8b"/>
                                    <stop offset=".7" stop-color="#616370"/><stop offset=".88" stop-color="#4d4f5a"/><stop offset=".96" stop-color="#5b5d69"/><stop offset="1" stop-color="#676979"/>
                                </linearGradient>
                                <linearGradient id="bore">
                                    <stop offset="0" stop-color="#5f616e"/><stop offset=".35" stop-color="#7f8194"/><stop offset=".8" stop-color="#50525d"/><stop offset="1" stop-color="#5b5d69"/>
                                </linearGradient>
                                <linearGradient id="cone">
                                    <stop offset="0" stop-color="#6b6d7c"/><stop offset=".15" stop-color="#5d5f6c"/><stop offset=".45" stop-color="#7c7e90"/>
                                    <stop offset=".7" stop-color="#898ba0"/><stop offset="1" stop-color="#787a8c"/>
                                </linearGradient>
                                <clipPath id="mouth"><ellipse cx="721" cy="434" rx="124" ry="71"/></clipPath>
                                <filter id="soft" x="-20%" y="-20%" width="140%" height="140%"><feGaussianBlur stdDeviation="5"/></filter>
                            </defs>
                            <path d="M583 455v75a138 79 0 0 0 276 0v-75z" fill="#55555a" opacity=".55" filter="url(#soft)"/>
                            <g stroke="#0a0a12" stroke-width="1.200">
                                <path d="M583.500 434v90a137.500 79 0 0 0 275 0v-90z" fill="url(#outer)"/>
                                <ellipse cx="721" cy="434" rx="137.500" ry="79.500" fill="#a2a4bb"/>
                                <ellipse cx="721" cy="434" rx="124" ry="71" fill="url(#inner)"/>
                                <ellipse cx="721" cy="473.500" rx="124" ry="71.500" fill="#a2a4bb" clip-path="url(#mouth)"/>
                                <path d="M679 436l-12 31a55 32 0 1 0 108 0l-12-31z" fill="url(#cone)"/>
                                <ellipse cx="721" cy="442" rx="42.500" ry="24.700" fill="#a2a4bb"/>
                                <ellipse cx="721" cy="442.500" rx="20.500" ry="12" fill="url(#bore)"/>
                                <ellipse cx="721" cy="434" rx="124" ry="71" fill="none"/>
                            </g>
                        </svg>

                        <!-- axis triad -->
                        <svg class="triad" viewBox="0 0 60 60">
                            <path d="M30 40V20" stroke="#146c18" stroke-width="3.500"/><path d="M30 15l5 8-5 3-5-3z" fill="#1f9427" stroke="#0c4a10"/>
                            <path d="M30 40L16 47.500" stroke="#1616b4" stroke-width="3.500"/><path d="M8 52l7-8 4 7z" fill="#2a2ad8" stroke="#101080"/>
                            <path d="M30 40l14 7.500" stroke="#b01212" stroke-width="3.500"/><path d="M52 52l-7-8-4 7z" fill="#dd2626" stroke="#801010"/>
                            <text x="27" y="13" fill="#2b8a2f">Y</text><text x="3" y="56" fill="#2222cc">Z</text><text x="51" y="56" fill="#d42222">X</text>
                        </svg>
                        <div class="view-name">*Isometric</div>
                        <button class="handle" aria-label="Collapse panel"></button>
                    </div>
                </div>

                <nav class="sheets">
                    <button class="step" aria-label="First"><svg viewBox="0 0 14 12"><path d="M3.500 1v10M10 1L5 6l5 5z" fill="#999" stroke="#8c8c8c"/></svg></button>
                    <button class="step" aria-label="Previous"><svg viewBox="0 0 14 12"><path d="M9 1L4 6l5 5z" fill="#999"/></svg></button>
                    <button class="step" aria-label="Next"><svg viewBox="0 0 14 12"><path d="M5 1l5 5-5 5z" fill="#999"/></svg></button>
                    <button class="step" aria-label="Last"><svg viewBox="0 0 14 12"><path d="M10.500 1v10M4 1l5 5-5 5z" fill="#999" stroke="#8c8c8c"/></svg></button>
                    <button class="sheet current">Model</button>
                    <button class="sheet">3D Views</button>
                    <button class="sheet last">Motion Study 1</button>
                </nav>
            </div>

            <nav class="task-tabs" aria-label="Task pane">
                <button aria-label="Resources"><svg><use href="#i-home"/></svg></button>
                <button aria-label="Design library"><svg><use href="#i-library"/></svg></button>
                <button aria-label="File explorer"><svg><use href="#i-files"/></svg></button>
                <button aria-label="View palette"><svg><use href="#i-palette"/></svg></button>
                <button class="current" aria-label="Appearances"><svg><use href="#i-ball"/></svg></button>
                <button aria-label="Custom properties"><svg><use href="#i-props"/></svg></button>
                <button aria-label="Forum"><svg><use href="#i-forum"/></svg></button>
            </nav>
        </main>

        <aside class="task-pane">
            <button class="collapse" aria-label="Collapse"><svg viewBox="0 0 12 12"><path d="M12 2L8 6l4 4" fill="none" stroke="#111" stroke-width="2"/></svg></button>
            <div class="pane-head"><span class="ring"></span></div>
            <div class="pane-list"><i></i><i></i><i></i></div>
            <div class="split"></div>
            <div class="swatch"></div>
            <div class="split"></div>
        </aside>
    </div>
</body>
</html>
```
FILE: styles.css
```css
* {
    margin: 0;
    padding: 0;
    box-sizing: border-box;
}

body {
    display: flex;
    flex-direction: column;
    height: 100vh;
    overflow: hidden;
    background: #f6f6f6;
    color: #111;
    font-family: "Open Sans", "Noto Sans", sans-serif;
    font-size: 11px;
    line-height: 13px;
}

button,
input {
    font: inherit;
    color: inherit;
    background: none;
    border: none;
    border-radius: 0;
}

svg {
    display: block;
    flex: none;
    width: 20px;
    height: 20px;
}

.sprite {
    position: absolute;
    width: 0;
    height: 0;
}

/* app bar */
.app-bar {
    display: flex;
    align-items: center;
    flex: none;
    height: 31px;
    border-bottom: 1px solid #8a8a8a;
}

.logo {
    display: flex;
    align-items: center;
    align-self: flex-start;
    position: relative;
    z-index: 2;
    gap: 4px;
    width: 145px;
    height: 35px;
    margin-left: 10px;
    padding: 0 4px;
    border: 1px solid #8a8a8a;
    border-top: none;
    background: linear-gradient(to bottom, #fff 30%, #dcdcdc);
}

.logo-mark {
    width: 28px;
    height: 28px;
    margin-bottom: 4px;
}

.logo-text {
    padding-top: 4px;
    color: #d22d26;
    font-size: 17px;
    font-style: italic;
    line-height: 20px;
}

.logo-text b {
    font-weight: 800;
}

.menu-arrow {
    width: 21px;
    height: 30px;
    border-right: 1px solid #777;
}

.menu-arrow::before {
    content: "";
    display: block;
    margin-left: 7px;
    border: 6px solid transparent;
    border-left: 7px solid #555;
    border-right: none;
}

.quick-bar {
    display: flex;
    align-items: center;
    padding: 2px 0 0 30px;
}

.quick-btn {
    display: flex;
    align-items: center;
    justify-content: center;
    width: 22px;
    height: 26px;
}

.quick-btn.wide {
    width: 26px;
}

.quick-btn.picked {
    width: 25px;
    border: 1px solid #5b9bc4;
    background: #b0b0b0;
}

.drop {
    display: flex;
    align-items: center;
    justify-content: center;
    width: 17px;
    height: 26px;
}

.drop::before {
    content: "";
    border: 3px solid transparent;
    border-top-color: #444;
    border-bottom: none;
}

.drop.boxed {
    width: 13px;
    border: 1px solid #5f8ba8;
    border-left: none;
}

.doc-title {
    flex: 1;
    padding-top: 2px;
    text-align: center;
    line-height: 16px;
}

.search {
    display: flex;
    align-items: center;
    gap: 3px;
    width: 114px;
    height: 23px;
    margin-top: 1px;
    padding-left: 3px;
    border: 1px solid #aaa;
    border-right: none;
}

.search input {
    flex: 1;
    min-width: 0;
    height: 20px;
    outline: none;
}

.search input::placeholder {
    color: #6a6a6a;
}

/* ribbon */
.ribbon {
    display: flex;
    flex: none;
    height: 87px;
    padding: 6px 0 2px 6px;
    border-bottom: 1px solid #8a8a8a;
}

.ribbon svg {
    width: 18px;
    height: 18px;
}

.tool {
    display: flex;
    flex-direction: column;
    align-items: center;
    flex: none;
    padding-top: 12px;
    border: 1px solid transparent;
    white-space: nowrap;
}

.tool svg {
    margin-bottom: 1px;
}

.tool.has-drop {
    padding-top: 4px;
}

.tool.has-drop::after {
    content: "";
    margin: auto 0 8px;
    border: 3px solid transparent;
    border-top-color: #333;
    border-bottom: none;
}

.w36 { width: 36px; }
.w46 { width: 46px; }
.w56 { width: 56px; }
.w60 { width: 60px; }

.tool.hovered {
    border-color: #7d7d7d;
    background: #fff;
}

.tool.active {
    border-color: #5289a5;
    background: #b0b0b0;
}

.curves {
    margin-right: 2px;
}

.stack {
    display: grid;
    grid-template-rows: repeat(3, 26px);
    flex: none;
    padding-left: 3px;
}

.stack button {
    display: flex;
    align-items: center;
    gap: 7px;
    padding-bottom: 2px;
    white-space: nowrap;
}

.boss {
    width: 143px;
    border-right: 1px solid #bbb;
}

.cuts {
    width: 110px;
    border-right: 1px solid #bbb;
}

.solids {
    width: 65px;
}

.bodies {
    width: 85px;
    border-right: 1px solid #bbb;
}

/* lower area */
.lower {
    display: flex;
    flex: 1;
    min-height: 0;
}

.desk {
    display: flex;
    flex-direction: column;
    flex: 1;
    position: relative;
    min-width: 0;
    background: #e5e5e5;
}

.tabs {
    display: flex;
    flex: none;
    height: 21px;
}

.tab {
    padding: 0 6px;
    border-right: 1px solid #888;
    background: #d3d3d3;
    color: #333;
    font-size: 12px;
    white-space: nowrap;
}

.tab.current {
    padding: 0 7px 0 8px;
    background: #f6f6f6;
    font-weight: 600;
}

/* document window */
.window {
    display: flex;
    flex-direction: column;
    flex: 1;
    min-height: 0;
    margin: 1px 2px 0 0;
    padding: 0 7px 2px;
    border: 1px solid #15202c;
    border-bottom: none;
    border-radius: 7px 7px 0 0;
    background: linear-gradient(to bottom, #9ab5d2, #b9d1ea 30px);
    box-shadow: inset -3px 0 #a3dcf6;
}

.window-bar {
    display: flex;
    align-items: center;
    flex: none;
    gap: 3px;
    height: 29px;
    padding: 4px 2px 0;
    font-size: 12px;
    line-height: 16px;
}

.part-icon {
    width: 16px;
    height: 16px;
}

.window-btns {
    display: flex;
    gap: 3px;
    margin-left: auto;
}

.window-btns button {
    display: flex;
    align-items: center;
    justify-content: center;
    width: 30px;
    height: 18px;
    border: 1px solid #5a7796;
    border-radius: 2px;
    background: linear-gradient(to bottom, #d0dfee, #a4bfda);
}

.window-btns .joined {
    margin-left: -4px;
}

.window-btns .close {
    width: 32px;
    border-color: #6b2a22;
    background: linear-gradient(to bottom, #e39a8a, #c4402a 50%, #d0563c);
}

.window-btns svg {
    width: 14px;
    height: 14px;
}

.window-body {
    display: flex;
    flex: 1;
    min-height: 0;
}

/* feature tree */
.side {
    display: flex;
    flex-direction: column;
    flex: none;
    width: 238px;
    padding-top: 3px;
    border-right: 1px solid #777;
    background: #f6f6f6;
}

.grip {
    display: flex;
    align-items: center;
    justify-content: center;
    height: 16px;
    margin-right: 2px;
    border: 1px solid #bbb;
    border-width: 1px 0;
}

.grip::before {
    content: "";
    width: 6px;
    height: 6px;
    border: 1px solid #999;
    border-radius: 50%;
    background: #ccc;
}

.side-tabs {
    display: flex;
    flex: none;
    height: 26px;
    margin-top: 4px;
}

.side-tabs button {
    display: flex;
    align-items: center;
    justify-content: center;
    width: 40px;
    border: 1px solid #888;
    border-left: none;
    background: #d3d3d3;
}

.side-tabs .current {
    border-bottom-color: transparent;
    background: none;
}

.side-tabs .more {
    width: auto;
    margin-left: auto;
    border: none;
    background: none;
}

.filter {
    display: flex;
    align-items: center;
    flex: none;
    height: 26px;
    margin: 0 3px;
    border: 1px solid #bbb;
}

.filter input {
    flex: 1;
    min-width: 0;
    outline: none;
}

.tree-root {
    display: flex;
    align-items: center;
    gap: 5px;
    height: 22px;
    padding-left: 2px;
    white-space: nowrap;
}

.tree-root svg,
.tree svg,
.side-tabs .current svg {
    width: 18px;
    height: 18px;
}

.tree {
    flex: none;
    margin-right: 2px;
    border-bottom: 2px solid #1f56a8;
    list-style: none;
}

.tree li {
    display: flex;
    align-items: center;
    gap: 5px;
    position: relative;
    height: 22px;
    padding-left: 25px;
}

.closed::before {
    content: "";
    position: absolute;
    left: 8px;
    border: 4px solid transparent;
    border-left: 5px solid #555;
    border-right: none;
}

.scroll {
    display: flex;
    align-items: center;
    height: 18px;
    margin-top: auto;
}

.scroll svg {
    width: 16px;
    height: 16px;
}

.thumb {
    width: 188px;
    height: 15px;
    margin-right: auto;
    background: #cbcbcb;
}

/* graphics area */
.viewport {
    flex: 1;
    position: relative;
    min-width: 0;
    border-bottom: 1px solid #777;
    background:
        radial-gradient(ellipse 85% 56% at 0 0, #fff 45%, rgba(255, 255, 255, 0)),
        radial-gradient(ellipse 30% 60% at 100% 0, rgba(255, 255, 255, 0.5), rgba(255, 255, 255, 0)),
        linear-gradient(to bottom, #f4f5f9 0%, #e2e5ee 20%, #d9dde8 45%, #dfe2ec 57%, #f5f6fa 66%, #fff 76%, #fff 88%, #f8f9fb 100%);
}

.view-tools {
    display: flex;
    justify-content: center;
    gap: 6px;
    padding: 6px 6px 0 0;
}

.view-tools button {
    display: flex;
    align-items: center;
}

.view-tools svg {
    opacity: 0.9;
}

.view-tools .more::after {
    content: "";
    margin: 0 2px 0 6px;
    border: 3px solid transparent;
    border-top-color: #888;
    border-bottom: none;
}

.model {
    position: absolute;
    inset: 0;
    width: 100%;
    height: 100%;
    pointer-events: none;
}

.triad {
    position: absolute;
    left: 10px;
    bottom: 37px;
    width: 60px;
    height: 60px;
}

.triad text {
    font-size: 10px;
}

.view-name {
    position: absolute;
    left: 11px;
    bottom: 2px;
    font-size: 12px;
    font-weight: bold;
}

.handle {
    position: absolute;
    left: -1px;
    top: 239px;
    width: 9px;
    height: 39px;
    border: 1px solid #888;
    border-left: none;
    background: #f6f6f6;
}

.handle::before {
    content: "";
    display: block;
    width: 6px;
    height: 6px;
    border: 1px solid #999;
    border-radius: 50%;
    background: #ccc;
}

/* sheet tabs */
.sheets {
    display: flex;
    flex: none;
    height: 15px;
    padding-left: 2px;
    background: #f6f6f6;
    font-size: 12px;
}

.step {
    display: flex;
    align-items: center;
    justify-content: center;
    width: 16px;
    border: 1px solid #999;
    background: #bdbdbd;
}

.step svg {
    width: 14px;
    height: 11px;
}

.sheet {
    padding: 0 8px;
    border-right: 1px solid #777;
    background: #d6d6d6;
    white-space: nowrap;
}

.sheet.current {
    padding-left: 12px;
    background: #f6f6f6;
    font-weight: bold;
}

.sheet.last {
    padding-right: 16px;
}

/* task pane */
.task-tabs {
    display: flex;
    flex-direction: column;
    position: absolute;
    top: 43px;
    right: 0;
    width: 26px;
    border: 1px solid #888;
    border-bottom: none;
    background: #d3d3d3;
}

.task-tabs button {
    display: flex;
    align-items: center;
    justify-content: center;
    height: 24px;
    border-bottom: 1px solid #888;
}

.task-tabs .current {
    background: #fff;
}

.task-tabs .current svg {
    width: 17px;
    height: 17px;
}

.task-pane {
    display: flex;
    flex-direction: column;
    flex: none;
    width: 12px;
    overflow: hidden;
    border-left: 1px solid #888;
    background: #f8f8f8;
}

.collapse {
    height: 17px;
    border-bottom: 1px solid #222;
    background: #a8a8a8;
}

.collapse svg {
    width: 12px;
    height: 12px;
}

.pane-head {
    height: 35px;
    padding: 9px 0 0 6px;
    border-bottom: 1px solid #aaa;
}

.ring {
    display: block;
    width: 16px;
    height: 16px;
    border: 1px solid #bbb;
    border-radius: 50%;
}

.pane-list {
    display: flex;
    flex-direction: column;
    gap: 18px;
    height: 174px;
    padding: 16px 0 0 10px;
}

.pane-list i {
    height: 4px;
    background: #ccc;
}

.split {
    height: 6px;
    margin: 0 0 0 1px;
    border: 2px solid #77778f;
    border-width: 2px 0;
    background: #d5d5e2;
}

.swatch {
    height: 60px;
    margin: 5px 0 6px 5px;
    border: 1px solid #222;
    border-right: none;
    background: #ffff80;
}
```
